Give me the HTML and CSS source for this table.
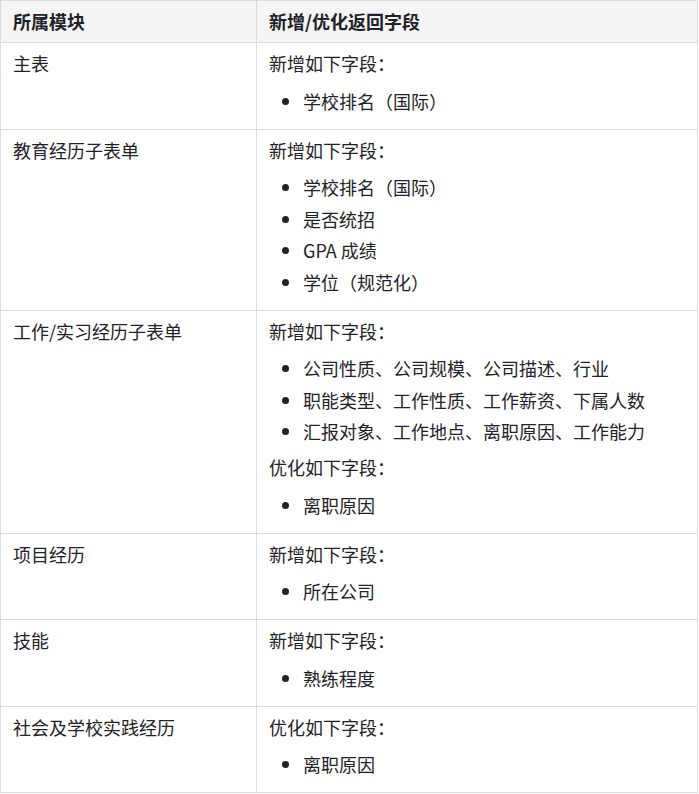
FILE: index.html
```html
<!DOCTYPE html>
<html lang="zh-CN">
<head>
<meta charset="utf-8">
<title>字段表</title>
<link rel="stylesheet" href="styles.css">
</head>
<body>
<table class="fields">
  <thead>
    <tr><th class="c1">所属模块</th><th>新增/优化返回字段</th></tr>
  </thead>
  <tbody>
    <tr>
      <td>主表</td>
      <td><p>新增如下字段：</p><ul><li>学校排名（国际）</li></ul></td>
    </tr>
    <tr>
      <td>教育经历子表单</td>
      <td><p>新增如下字段：</p><ul><li>学校排名（国际）</li><li>是否统招</li><li>GPA 成绩</li><li>学位（规范化）</li></ul></td>
    </tr>
    <tr>
      <td>工作/实习经历子表单</td>
      <td><p>新增如下字段：</p><ul><li>公司性质、公司规模、公司描述、行业</li><li>职能类型、工作性质、工作薪资、下属人数</li><li>汇报对象、工作地点、离职原因、工作能力</li></ul><p>优化如下字段：</p><ul><li>离职原因</li></ul></td>
    </tr>
    <tr>
      <td>项目经历</td>
      <td><p>新增如下字段：</p><ul><li>所在公司</li></ul></td>
    </tr>
    <tr>
      <td>技能</td>
      <td><p>新增如下字段：</p><ul><li>熟练程度</li></ul></td>
    </tr>
    <tr>
      <td>社会及学校实践经历</td>
      <td><p>优化如下字段：</p><ul><li>离职原因</li></ul></td>
    </tr>
  </tbody>
</table>
</body>
</html>
```
FILE: styles.css
```css
html, body {
  margin: 0;
  padding: 0;
  background: #ffffff;
}
body {
  font-family: "Noto Sans CJK SC", "Noto Sans", sans-serif;
  font-size: 18px;
  line-height: 28px;
  color: #1f2329;
}
.fields {
  border-collapse: collapse;
  width: 698px;
  table-layout: fixed;
}
.fields th,
.fields td {
  border: 1px solid #dcdcdc;
  padding: 6px 12px;
  text-align: left;
  vertical-align: top;
}
.fields th {
  background: #f5f5f5;
  font-weight: 700;
  padding: 6px 12px 7px;
}
.fields .c1 {
  width: 231px;
}
.fields p {
  margin: 0;
}
.fields ul {
  margin: 9.5px 0 8px;
  padding-left: 34px;
}
.fields li + li {
  margin-top: 3.5px;
}
```
